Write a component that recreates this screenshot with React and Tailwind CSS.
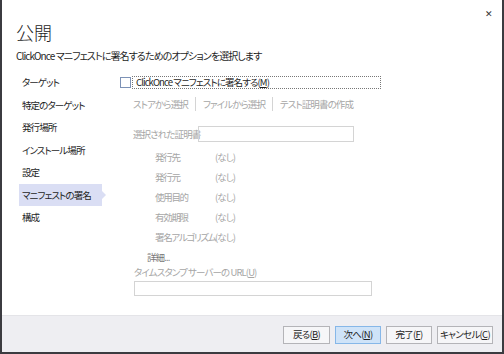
import React from 'react';

const navItems = ['ターゲット', '特定のターゲット', '発行場所', 'インストール場所', '設定', 'マニフェストの署名', '構成'];
const details = ['発行先', '発行元', '使用目的', '有効期限', '署名アルゴリズム'];

function Btn({ label, k, primary, w }) {
  return (
    <button
      className={
        'h-[18px] shrink-0 flex items-center justify-center text-[9.5px] leading-none border ' +
        w + ' ' +
        (primary ? 'bg-[#cfe3f8] border-[#86b7e8]' : 'bg-[#f6f6f8] border-[#b4b4b8]')
      }
    >
      {label}(<span className="underline">{k}</span>)
    </button>
  );
}

export default function App() {
  return (
    <div className="w-[504px] h-[354px] bg-white border-l-2 border-r-2 border-b-2 border-[#3b3b40] flex flex-col relative text-[#1e1e1e] whitespace-nowrap [font-family:'Noto_Sans_CJK_JP',sans-serif] [font-feature-settings:'palt']">
      <span className="absolute right-[9px] top-[7px] text-[9px] text-[#333]">✕</span>

      {/* header */}
      <div className="h-[70px] pl-[14px] pt-[20px]">
        <h1 className="text-[18px] leading-[24px] font-light">公開</h1>
        <p className="text-[10px] leading-[14px] mt-[5px] tracking-[-0.9px]">ClickOnce マニフェストに署名するためのオプションを選択します</p>
      </div>

      {/* body */}
      <div className="flex-1 flex text-[9.5px] tracking-[-0.9px]">
        <div className="w-[118px] shrink-0 pl-[17px] pt-px flex flex-col">
          {navItems.map((n) => (
            <div
              key={n}
              className={
                'h-[22.5px] w-[83px] pl-[3px] flex items-center relative ' +
                (n === 'マニフェストの署名' ? 'bg-[#dadef4]' : '')
              }
            >
              {n}
              {n === 'マニフェストの署名' && (
                <span className="absolute -right-[4px] top-[7px] w-0 h-0 border-y-[4px] border-y-transparent border-l-[4px] border-l-[#dadef4]" />
              )}
            </div>
          ))}
        </div>

        <div className="flex-1 pt-px flex flex-col">
          <div className="h-[22px] flex items-center">
            <span className="w-[11px] h-[11px] shrink-0 border border-[#7d92b6] bg-white" />
            <span className="ml-[1px] w-[249px] h-[13px] pl-[3px] flex items-center border border-dotted border-[#777]">
              ClickOnce マニフェストに署名する(<span className="underline">M</span>)
            </span>
          </div>

          <div className="h-[22px] pl-[13px] flex items-center text-[#a6a6a6]">
            <span className="shrink-0">ストアから選択</span>
            <span className="w-px h-[14px] shrink-0 bg-[#d4d4d4] mx-[7px]" />
            <span className="shrink-0">ファイルから選択</span>
            <span className="w-px h-[14px] shrink-0 bg-[#d4d4d4] mx-[7px]" />
            <span className="shrink-0">テスト証明書の作成</span>
          </div>

          <div className="h-[18px] mt-[10px] pl-[13px] flex items-center text-[#a6a6a6]">
            <span className="w-[65px] shrink-0">選択された証明書</span>
            <span className="w-[156px] h-[16px] shrink-0 border border-[#d4d4d4]" />
          </div>

          <div className="mt-[4px] flex flex-col pl-[35px] text-[#a6a6a6]">
            {details.map((d) => (
              <div key={d} className="h-[20px] flex items-center">
                <span className="w-[60px] shrink-0 tracking-[-1.3px]">{d}</span>
                <span>(なし)</span>
              </div>
            ))}
          </div>

          <div className="h-[18px] mt-px pl-[27px] flex items-center text-[#777]">詳細...</div>

          <div className="h-[12px] pl-[14px] flex items-center text-[#a6a6a6]">
            タイムスタンプ サーバーの URL(<span className="underline">U</span>)
          </div>
          <div className="ml-[14px] mt-[3px] w-[238px] h-[15px] border border-[#d4d4d4]" />
        </div>
      </div>

      {/* footer */}
      <div className="h-[37px] bg-[#eeeef2] border-t border-[#e4e4e8] flex items-center justify-end gap-[5px] pr-[9px] pt-[1px] tracking-[-0.7px]">
        <Btn label="戻る" k="B" w="w-[47px]" />
        <Btn label="次へ" k="N" w="w-[46px]" primary />
        <Btn label="完了" k="F" w="w-[46px]" />
        <Btn label="キャンセル" k="C" w="w-[56px]" />
      </div>
    </div>
  );
}
